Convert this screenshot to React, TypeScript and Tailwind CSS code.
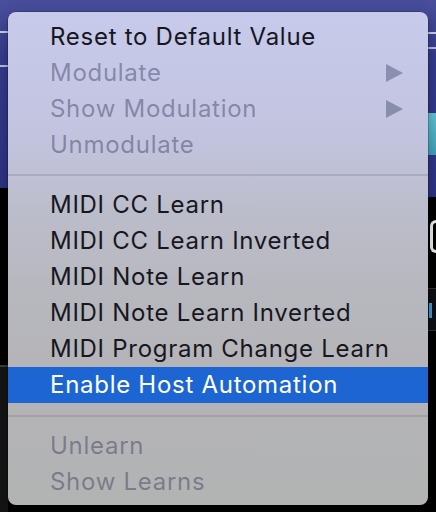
import React from "react";

type Item =
  | { kind: "item"; label: string; disabled?: boolean; submenu?: boolean; active?: boolean }
  | { kind: "sep"; pt: string; pb: string };

const items: Item[] = [
  { kind: "item", label: "Reset to Default Value" },
  { kind: "item", label: "Modulate", disabled: true, submenu: true },
  { kind: "item", label: "Show Modulation", disabled: true, submenu: true },
  { kind: "item", label: "Unmodulate", disabled: true },
  { kind: "sep", pt: "pt-[11px]", pb: "pb-[11px]" },
  { kind: "item", label: "MIDI CC Learn" },
  { kind: "item", label: "MIDI CC Learn Inverted" },
  { kind: "item", label: "MIDI Note Learn" },
  { kind: "item", label: "MIDI Note Learn Inverted" },
  { kind: "item", label: "MIDI Program Change Learn" },
  { kind: "item", label: "Enable Host Automation", active: true },
  { kind: "sep", pt: "pt-[12px]", pb: "pb-[11px]" },
  { kind: "item", label: "Unlearn", disabled: true },
  { kind: "item", label: "Show Learns", disabled: true },
];

function Arrow() {
  return (
    <svg width="17" height="18" viewBox="0 0 17 18" className="shrink-0">
      <polygon points="0,0 17,9 0,18" fill="rgba(40,44,80,0.36)" />
    </svg>
  );
}

export default function App() {
  return (
    <div className="relative w-[436px] h-[512px] overflow-hidden bg-black flex">
      {/* left strip */}
      <div className="w-[8px] flex flex-col">
        <div className="h-[188px] bg-[linear-gradient(180deg,#4b509d_0%,#353b8a_30%,#2c3281_100%)] flex flex-col">
          <div className="h-[31px]" />
          <div className="h-[2px] bg-[#c9cce6]" />
          <div className="h-[32px]" />
          <div className="h-[2px] bg-[#b9bcdc]" />
        </div>
        <div className="h-[177px] bg-black" />
        <div className="h-[2px] bg-[#3a3a3c]" />
        <div className="flex-1 bg-[#141414]" />
      </div>
      {/* center */}
      <div className="w-[420px] flex flex-col">
        <div className="h-[20px] bg-[#474c9a]" />
        <div className="flex-1 bg-black" />
      </div>
      {/* right strip */}
      <div className="w-[8px] flex flex-col">
        <div className="h-[197px] bg-[linear-gradient(180deg,#4a4f9c_0%,#343a89_30%,#2c3281_100%)] flex flex-col">
          <div className="h-[32px]" />
          <div className="h-[2px] bg-[#c9cce6]" />
          <div className="h-[13px]" />
          <div className="h-[2px] bg-[#b4b8da]" />
          <div className="h-[64px]" />
          <div className="h-[42px] bg-[linear-gradient(180deg,#5fc0cf,#3f9db3)]" />
        </div>
        <div className="h-[23px]" />
        <div className="h-[33px] flex">
          <div className="w-[3px]" />
          <div className="w-[8px] h-[33px] rounded-l-full border-l-[3px] border-y-[3px] border-[#e8e8e8]" />
        </div>
        <div className="h-[35px]" />
        <div className="h-[1px] bg-[#2e3036]" />
        <div className="h-[41px] bg-[#0d0f14] flex flex-col">
          <div className="h-[14px]" />
          <div className="h-[15px] flex">
            <div className="w-[1px]" />
            <div className="w-[3px] bg-[#3d9ad6]" />
          </div>
        </div>
        <div className="h-[1px] bg-[#2e3036]" />
        <div className="flex-1 bg-black" />
      </div>

      {/* popup menu */}
      <div
        className="absolute left-[8px] top-[12px] w-[420px] h-[493px] rounded-[8px] overflow-hidden shadow-[0_0_0_0.5px_rgba(0,0,0,0.35),0_4px_12px_rgba(0,0,0,0.3)] bg-[linear-gradient(180deg,#c7caeb_0%,#c2c4df_25%,#bcbdcb_40%,#b7b8bf_55%,#b4b4b7_75%,#b2b3b3_100%)] pt-[7px] pb-[5px] flex flex-col"
        style={{ fontFamily: "Inter, 'Noto Sans', sans-serif" }}
      >
        {items.map((it, i) =>
          it.kind === "sep" ? (
            <div key={i} className={`${it.pt} ${it.pb}`}>
              <div className="h-[2px] bg-[rgba(60,60,90,0.16)]" />
            </div>
          ) : (
            <div
              key={i}
              className={
                "h-[36px] flex items-center justify-between pl-[42px] pr-[25px] text-[24px] leading-[36px] tracking-[0.72px] " +
                (it.active
                  ? "bg-[#1c65d3] text-white"
                  : it.disabled
                  ? "text-[rgba(30,34,70,0.4)]"
                  : "text-[#17171f]")
              }
            >
              <span>{it.label}</span>
              {it.submenu ? <Arrow /> : null}
            </div>
          )
        )}
      </div>
    </div>
  );
}
